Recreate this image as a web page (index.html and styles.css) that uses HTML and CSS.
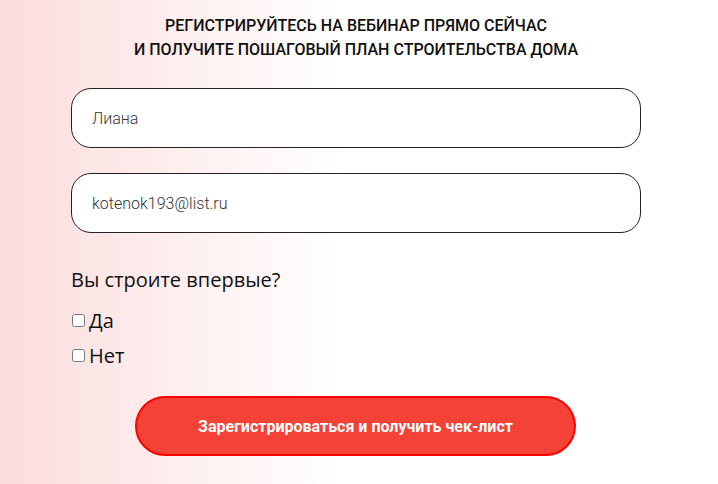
FILE: index.html
```html
<!DOCTYPE html>
<html lang="ru">
<head>
  <meta charset="UTF-8">
  <meta name="viewport" content="width=device-width, initial-scale=1.0">
  <title>Регистрация на вебинар</title>
  <link rel="stylesheet" href="styles.css">
</head>
<body>

  <section class="signup">
    <h2 class="signup-title">Регистрируйтесь на вебинар прямо сейчас<br>и получите пошаговый план строительства дома</h2>

    <form class="signup-form">
      <input class="field" type="text" value="Лиана">
      <input class="field" type="email" value="kotenok193@list.ru">

      <p class="question">Вы строите впервые?</p>
      <label class="option"><input type="checkbox"> Да</label>
      <label class="option"><input type="checkbox"> Нет</label>

      <button type="button" class="submit">Зарегистрироваться и получить чек-лист</button>
    </form>
  </section>

</body>
</html>
```

FILE: styles.css
```css
* {
  box-sizing: border-box;
}

body {
  margin: 0;
  min-height: 484px;
  font-family: 'Roboto', sans-serif;
  color: #111;
  background: linear-gradient(to right, #fcdcdc 0, #fff 340px);
}

.signup {
  width: 570px;
  margin: 0 auto 0 71px;
  padding-top: 14px;
}

.signup-title {
  margin: 0 0 26px;
  font-size: 16px;
  font-weight: 500;
  line-height: 24px;
  text-align: center;
  text-transform: uppercase;
}

.signup-form {
  display: flex;
  flex-direction: column;
}

.field {
  height: 60px;
  margin-bottom: 25px;
  padding: 0 20px;
  border: 1px solid #222;
  border-radius: 20px;
  background: #fff;
  font-family: 'Roboto', sans-serif;
  font-size: 16px;
  font-weight: 300;
  color: #333;
}

.question {
  margin: 9px 0 10px;
  font-family: 'Open Sans', sans-serif;
  font-size: 20px;
  line-height: 26px;
}

.option {
  display: flex;
  align-items: center;
  height: 35px;
  font-family: 'Open Sans', sans-serif;
  font-size: 20px;
}

.option input {
  margin: 0 4px 0 1px;
}

.submit {
  align-self: flex-start;
  width: 441px;
  height: 60px;
  margin: 23px 0 0 64px;
  border: 2px solid #f00;
  border-radius: 30px;
  background: #f44336;
  color: #fff;
  font-family: 'Roboto', sans-serif;
  font-size: 16px;
  font-weight: 700;
  cursor: pointer;
}
```
